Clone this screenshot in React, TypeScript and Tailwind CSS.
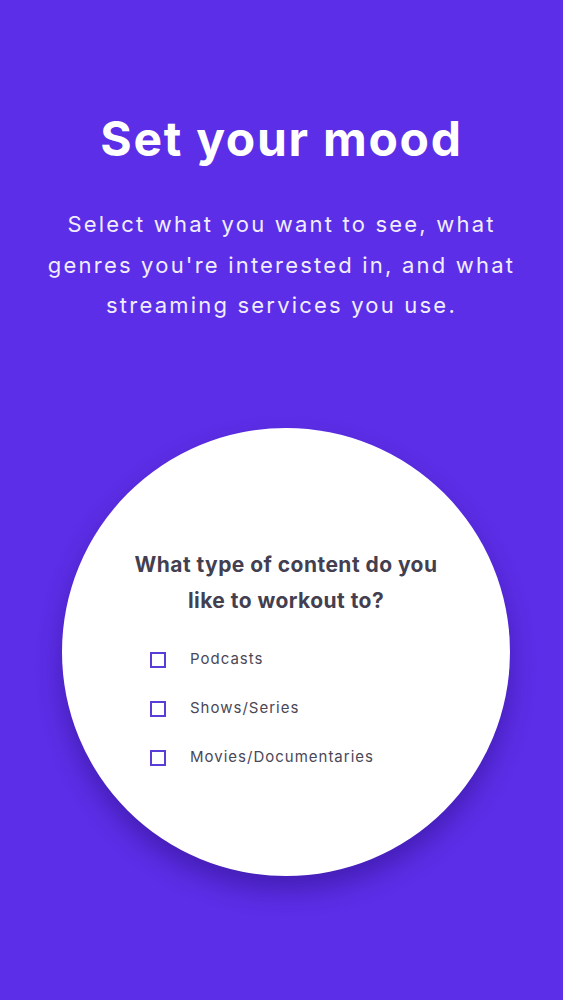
const options = ["Podcasts", "Shows/Series", "Movies/Documentaries"];

export default function App() {
  return (
    <div
      className="w-full h-[1000px] bg-[#5c2ee7] flex flex-col overflow-hidden"
      style={{ fontFamily: "Inter, 'Noto Sans', sans-serif" }}
    >
      {/* Heading */}
      <h1 className="pt-[110px] text-center text-[48px] leading-[58px] font-bold text-white tracking-[1.7px]">
        Set your mood
      </h1>

      {/* Intro */}
      <p className="mt-[36px] text-center text-[22px] leading-[40.5px] text-[#f1edff] tracking-[2.2px]">
        Select what you want to see, what
        <br />
        genres you're interested in, and what
        <br />
        streaming services you use.
      </p>

      {/* Question card */}
      <div className="mt-[102px] ml-[62px] w-[448px] h-[448px] rounded-full bg-white shadow-[0_14px_24px_rgba(40,10,120,0.45)] flex flex-col items-center">
        <h2 className="mt-[119px] text-center text-[21px] leading-[36px] font-bold text-[#433f50] tracking-[0.45px]">
          What type of content do you
          <br />
          like to workout to?
        </h2>

        <div className="mt-[29px] w-full pl-[88px] flex flex-col gap-[25px]">
          {options.map((opt) => (
            <label key={opt} className="flex items-center gap-[24px] h-[24px]">
              <span className="w-[16px] h-[16px] border-2 border-[#5a3dd6] shrink-0" />
              <span className="text-[15px] text-[#4a4757] tracking-[1px]">{opt}</span>
            </label>
          ))}
        </div>
      </div>
    </div>
  );
}
